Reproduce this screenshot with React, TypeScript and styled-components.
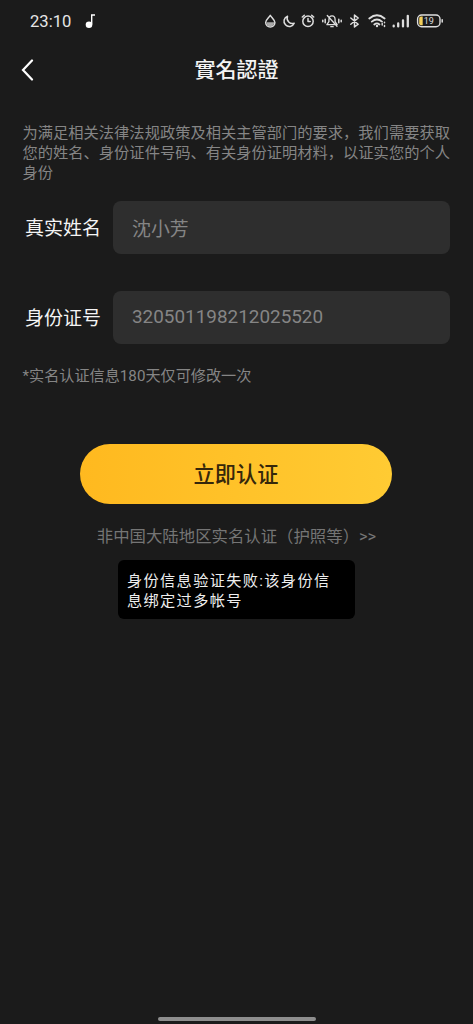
import React from 'react';
import styled, { createGlobalStyle } from 'styled-components';

const GlobalStyle = createGlobalStyle`
  *, *::before, *::after { box-sizing: border-box; }
  html, body { margin: 0; background: #1b1b1b; }
  body { font-family: Roboto, 'Noto Sans CJK SC', sans-serif; color: #f4f4f4; }
`;

const Screen = styled.div`
  position: relative;
  display: flex;
  flex-direction: column;
  width: 473px;
  height: 1024px;
  overflow: hidden;
  background: #1b1b1b;
`;

const StatusBar = styled.div`
  display: flex;
  align-items: center;
  height: 42px;
  padding: 0 30px;
`;

const Clock = styled.span`
  width: 55px;
  padding-top: 2px;
  font-size: 16.6px;
  line-height: 20px;
  color: #e6e6e6;
`;

const StatusIcons = styled.svg`
  display: block;
  margin-left: auto;
`;

const BatteryLevel = styled.text`
  font-family: Roboto, sans-serif;
  font-size: 9px;
  fill: #dedede;
`;

const Header = styled.header`
  display: grid;
  grid-template-columns: 60px 1fr 60px;
  align-items: center;
  height: 56px;
`;

const BackButton = styled.button`
  display: flex;
  align-items: center;
  padding: 0 0 0 20px;
  border: 0;
  background: none;
`;

const Title = styled.h1`
  margin: 0;
  padding-bottom: 4px;
  text-align: center;
  font-family: 'Noto Sans CJK TC', sans-serif;
  font-size: 21px;
  line-height: 30px;
  font-weight: 500;
`;

const Content = styled.main`
  display: flex;
  flex-direction: column;
  padding: 25px 23px 0 22px;
`;

const Intro = styled.p`
  margin: 0 0 18px;
  padding-left: 0.5px;
  font-size: 15.27px;
  line-height: 20px;
  white-space: nowrap;
  color: #858585;
`;

const Field = styled.label`
  display: flex;
  align-items: center;
  height: 53px;
  margin-bottom: 36.5px;
  padding-left: 3px;
`;

const FieldLabel = styled.span`
  width: 88px;
  padding-top: 3px;
  font-size: 19px;
  line-height: 28px;
`;

const FieldInput = styled.input`
  flex: 1;
  min-width: 0;
  height: 53px;
  padding: 0 19px 1px;
  border: 0;
  border-radius: 8px;
  outline: none;
  background: #2e2e2e;
  font: 18.9px Roboto, 'Noto Sans CJK SC', sans-serif;
  color: #858585;
`;

const Note = styled.p`
  margin: -14.5px 0 58px;
  padding-left: 0.5px;
  font-size: 15.15px;
  line-height: 20px;
  color: #858585;
`;

const SubmitButton = styled.button`
  align-self: center;
  width: 312px;
  height: 60.5px;
  padding: 0 0 2px;
  border: 0;
  border-radius: 31px;
  background: linear-gradient(90deg, #ffb91f, #ffcb33);
  font: 500 21.2px 'Noto Sans CJK SC', sans-serif;
  color: #35270b;
`;

const PassportLink = styled.a`
  align-self: center;
  margin-top: 21px;
  padding-left: 1px;
  font-size: 16.4px;
  line-height: 24px;
  white-space: nowrap;
  color: #757575;
`;

const Toast = styled.div`
  position: absolute;
  top: 560px;
  left: 118px;
  width: 237px;
  height: 59px;
  padding: 11px 0 0 9px;
  border-radius: 6px;
  background: #000;
  font-size: 15.2px;
  line-height: 20px;
  letter-spacing: 1.35px;
  white-space: nowrap;
  color: #efefef;
`;

const HomeIndicator = styled.div`
  width: 158px;
  height: 4px;
  margin: auto auto 3px;
  border-radius: 2px;
  background: #8e8e8e;
`;

export default function App() {
  return (
    <Screen>
      <GlobalStyle />
      <StatusBar>
        <Clock>23:10</Clock>
        <svg width="12" height="16" viewBox="0 0 12 16">
          <circle cx="4" cy="11.7" r="3.3" fill="#fff" />
          <path d="M6.7 11.5V2H10" fill="none" stroke="#fff" strokeWidth="1.4" />
        </svg>
        <StatusIcons width="180" height="20" viewBox="263 11 180 20" fill="none" stroke="#dedede" strokeWidth="1.5" strokeLinecap="round" strokeLinejoin="round">
          <path d="M270.3 15.4C268.8 17.8 265.7 20 265.7 22.5A4.6 4.4 0 0 0 274.9 22.5C274.9 20 271.9 17.8 270.3 15.4Z" />
          <path d="M266.5 22.2H274.2C274.2 25 272.5 26.5 270.3 26.5S266.5 25 266.5 22.2Z" fill="#aaa" stroke="none" />
          <path d="M287.5 16.2A5.3 5.3 0 1 0 294.2 23.2C290.2 24.8 285.8 20.5 287.5 16.2Z" />
          <circle cx="308" cy="21.3" r="5.2" />
          <path d="M308 18.5V21.5H310.2M302.3 17L304.3 15.3M311.7 15.3L313.7 17" />
          <path d="M326.9 24.6H337.2L335.1 21.7V19.8C335.1 17.3 333.8 15.9 332 15.9C330.2 15.9 328.9 17.3 328.9 19.8V21.7ZM330.8 26.7H333.2M327.3 15.5L337 26.2" strokeWidth="1.3" />
          <path d="M325.2 19.3V22.8M322.8 20.3V21.7M338.8 19.3V22.8M341.2 20.3V21.7" />
          <path d="M350.8 18L358.2 24.2L354.5 27V15L358.2 18L350.8 24.2" />
          <path d="M369.3 18.5Q377 12 384.6 18.5M371.8 21.6Q377 17.4 382 21.6M374.3 24.5Q377 22.2 379.4 24.5" strokeWidth="1.8" />
          <circle cx="377" cy="26" r="1.2" fill="#dedede" stroke="none" />
          <path d="M382.2 25V23.6M384.5 25.5V26.4M384.5 22.2V22.8" strokeWidth="1.5" />
          <path d="M393.7 25.7V26.4M398.2 23.4V26.4M403 20.3V26.4M407.8 15.8V26.4" strokeWidth="2.3" />
          <rect x="417.6" y="15" width="22.4" height="11.8" rx="4" strokeWidth="1.4" />
          <path d="M442.2 19.8V22" />
          <path d="M422.7 16.6V25.2H421Q419.2 25.2 419.2 23.4V18.4Q419.2 16.6 421 16.6Z" fill="#f3cf5b" stroke="none" />
          <BatteryLevel x="423.8" y="24.2" stroke="none">19</BatteryLevel>
        </StatusIcons>
      </StatusBar>
      <Header>
        <BackButton aria-label="返回">
          <svg width="16" height="22" viewBox="0 0 16 22" fill="none" stroke="#fff" strokeWidth="2.2" strokeLinecap="round">
            <path d="M12 1.5L3 11L12 20.5" />
          </svg>
        </BackButton>
        <Title>實名認證</Title>
      </Header>
      <Content>
        <Intro>
          为满足相关法律法规政策及相关主管部门的要求，我们需要获取<br />
          您的姓名、身份证件号码、有关身份证明材料，以证实您的个人<br />
          身份
        </Intro>
        <Field>
          <FieldLabel>真实姓名</FieldLabel>
          <FieldInput defaultValue="沈小芳" />
        </Field>
        <Field>
          <FieldLabel>身份证号</FieldLabel>
          <FieldInput defaultValue="320501198212025520" />
        </Field>
        <Note>*实名认证信息180天仅可修改一次</Note>
        <SubmitButton>立即认证</SubmitButton>
        <PassportLink>非中国大陆地区实名认证（护照等）&gt;&gt;</PassportLink>
      </Content>
      <Toast role="alert">
        身份信息验证失败:该身份信<br />
        息绑定过多帐号
      </Toast>
      <HomeIndicator />
    </Screen>
  );
}
